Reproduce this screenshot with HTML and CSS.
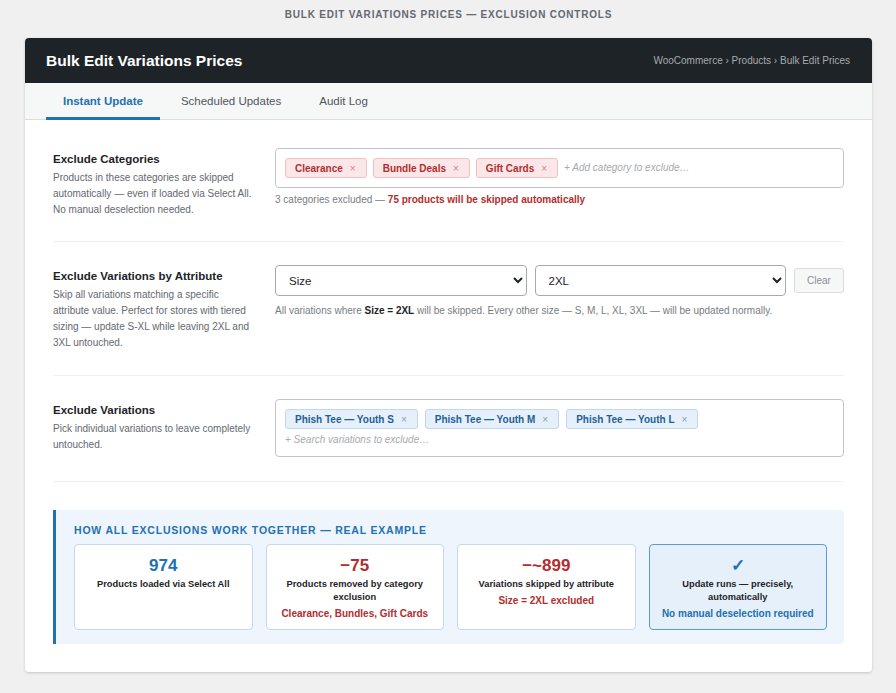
FILE: index.html
```html
<!DOCTYPE html>
<html lang="en">
<head>
    <meta charset="UTF-8">
    <meta name="viewport" content="width=device-width, initial-scale=1.0">
    <title>Bulk Edit Variations Prices</title>
    <link rel="stylesheet" href="styles.css">
</head>
<body>
    <h1 class="page-title">Bulk Edit Variations Prices — Exclusion Controls</h1>
    <div class="panel">
        <header class="panel-head">
            <h2>Bulk Edit Variations Prices</h2>
            <span class="crumbs">WooCommerce › Products › Bulk Edit Prices</span>
        </header>
        <nav class="tabs">
            <a href="#" class="tab active">Instant Update</a>
            <a href="#" class="tab">Scheduled Updates</a>
            <a href="#" class="tab">Audit Log</a>
        </nav>
        <main class="panel-body">
            <section class="row">
                <div class="row-label">
                    <h3>Exclude Categories</h3>
                    <p>Products in these categories are skipped automatically — even if loaded via Select All. No manual deselection needed.</p>
                </div>
                <div class="row-field">
                    <div class="tagbox">
                        <span class="tag red">Clearance<i>×</i></span>
                        <span class="tag red">Bundle Deals<i>×</i></span>
                        <span class="tag red">Gift Cards<i>×</i></span>
                        <span class="placeholder">+ Add category to exclude…</span>
                    </div>
                    <p class="hint">3 categories excluded — <strong class="warn">75 products will be skipped automatically</strong></p>
                </div>
            </section>
            <section class="row">
                <div class="row-label">
                    <h3>Exclude Variations by Attribute</h3>
                    <p>Skip all variations matching a specific attribute value. Perfect for stores with tiered sizing — update S-XL while leaving 2XL and 3XL untouched.</p>
                </div>
                <div class="row-field">
                    <div class="select-row">
                        <select><option>Size</option><option>Color</option></select>
                        <select><option>2XL</option><option>3XL</option></select>
                        <button class="btn-clear">Clear</button>
                    </div>
                    <p class="hint after-select">All variations where <strong>Size = 2XL</strong> will be skipped. Every other size — S, M, L, XL, 3XL — will be updated normally.</p>
                </div>
            </section>
            <section class="row">
                <div class="row-label">
                    <h3>Exclude Variations</h3>
                    <p>Pick individual variations to leave completely untouched.</p>
                </div>
                <div class="row-field">
                    <div class="tagbox stacked">
                        <div class="tags">
                            <span class="tag blue">Phish Tee — Youth S<i>×</i></span>
                            <span class="tag blue">Phish Tee — Youth M<i>×</i></span>
                            <span class="tag blue">Phish Tee — Youth L<i>×</i></span>
                        </div>
                        <span class="placeholder">+ Search variations to exclude…</span>
                    </div>
                </div>
            </section>

            <div class="summary">
                <h4>How all exclusions work together — real example</h4>
                <div class="steps">
                    <div class="step">
                        <div class="num">974</div>
                        <div class="step-label">Products loaded via Select All</div>
                    </div>
                    <div class="step">
                        <div class="num minus">−75</div>
                        <div class="step-label">Products removed by category exclusion</div>
                        <div class="step-sub">Clearance, Bundles, Gift Cards</div>
                    </div>
                    <div class="step">
                        <div class="num minus">−~899</div>
                        <div class="step-label">Variations skipped by attribute</div>
                        <div class="step-sub">Size = 2XL excluded</div>
                    </div>
                    <div class="step done">
                        <div class="num">✓</div>
                        <div class="step-label">Update runs — precisely, automatically</div>
                        <div class="step-sub">No manual deselection required</div>
                    </div>
                </div>
            </div>
        </main>
    </div>
</body>
</html>
```

FILE: styles.css
```css
* {
    margin: 0;
    padding: 0;
    box-sizing: border-box;
}
body {
    font-family: "Liberation Sans", Arial, sans-serif;
    background-color: #f0f0f1;
    color: #1d2327;
    padding: 8px 24px 20px 25px;
}
.page-title {
    font-size: 10px;
    line-height: 14px;
    font-weight: 700;
    letter-spacing: 0.8px;
    text-transform: uppercase;
    text-align: center;
    color: #646970;
    margin-bottom: 16px;
}
.panel {
    background-color: #ffffff;
    border-radius: 4px;
    box-shadow: 0 1px 3px rgba(0, 0, 0, 0.18);
    overflow: hidden;
}
.panel-head {
    background-color: #1d2327;
    height: 45px;
    padding: 0 22px 0 21px;
    display: flex;
    align-items: center;
    justify-content: space-between;
}
.panel-head h2 {
    color: #ffffff;
    font-size: 15.5px;
    font-weight: 700;
}
.crumbs {
    color: #a7aaad;
    font-size: 10px;
}
.tabs {
    display: flex;
    gap: 4px;
    background-color: #f6f7f7;
    border-bottom: 1px solid #dcdcde;
    padding: 0 21px;
    height: 37px;
}
.tab {
    display: flex;
    align-items: center;
    padding: 2px 17px 0;
    font-size: 11.5px;
    color: #50575e;
    text-decoration: none;
    border-bottom: 3px solid transparent;
    margin-bottom: -1px;
}
.tab.active {
    color: #2271b1;
    font-weight: 700;
    border-bottom-color: #2271b1;
}
.panel-body {
    padding: 28px;
}
.row {
    display: grid;
    grid-template-columns: 202px 1fr;
    gap: 20px;
    padding: 23px 0 24px;
    border-bottom: 1px solid #f0f0f1;
}
.row:first-child {
    padding-top: 0;
    padding-bottom: 23px;
}
.row-label {
    padding-top: 4px;
}
.row-label h3 {
    font-size: 11.5px;
    line-height: 15px;
    font-weight: 700;
    color: #1d2327;
    margin-bottom: 3px;
}
.row-label p {
    font-size: 10px;
    line-height: 16px;
    color: #646970;
}
.tagbox {
    border: 1px solid #c3c4c7;
    border-radius: 4px;
    padding: 9px;
    display: flex;
    flex-wrap: wrap;
    align-items: center;
    gap: 6px;
}
.tagbox.stacked {
    flex-direction: column;
    align-items: flex-start;
    gap: 4px;
}
.tags {
    display: flex;
    gap: 7px;
}
.tag {
    display: inline-flex;
    align-items: center;
    height: 20px;
    padding: 0 10px 0 9px;
    border-radius: 3px;
    font-size: 10px;
    font-weight: 700;
    border: 1px solid;
}
.tag i {
    font-style: normal;
    font-weight: 400;
    font-size: 10px;
    margin-left: 7px;
    opacity: 0.55;
}
.tag.red {
    background-color: #fce7e8;
    border-color: #f1c0c1;
    color: #b32d2e;
}
.tag.blue {
    background-color: #e6f0fa;
    border-color: #c2d7ec;
    color: #1e5f96;
}
.placeholder {
    font-size: 10px;
    line-height: 14px;
    font-style: italic;
    color: #a7aaad;
}
.hint {
    margin-top: 5px;
    font-size: 10px;
    line-height: 14px;
    color: #787c82;
}
.hint strong {
    color: #1d2327;
}
.hint .warn {
    color: #b32d2e;
}
.hint.after-select {
    margin-top: 8px;
}
.select-row {
    display: flex;
    align-items: center;
    gap: 8px;
}
.select-row select {
    flex: 1;
    height: 31px;
    border: 1px solid #a7aaad;
    border-radius: 4px;
    background-color: #ffffff;
    padding: 0 9px;
    font-family: inherit;
    font-size: 11.5px;
    color: #1d2327;
}
.btn-clear {
    width: 50px;
    height: 25px;
    border: 1px solid #dcdcde;
    border-radius: 3px;
    background-color: #f6f7f7;
    color: #8c8f94;
    font-family: inherit;
    font-size: 10px;
}
.summary {
    margin-top: 28px;
    background-color: #eff5fc;
    border-left: 3px solid #2271b1;
    border-radius: 0 4px 4px 0;
    padding: 13px 17px 14px 18px;
}
.summary h4 {
    font-size: 10.5px;
    line-height: 14px;
    font-weight: 700;
    letter-spacing: 0.8px;
    text-transform: uppercase;
    color: #2271b1;
    margin-bottom: 7px;
}
.steps {
    display: grid;
    grid-template-columns: repeat(4, 1fr);
    gap: 13px;
}
.step {
    background-color: #ffffff;
    border: 1px solid #c5d9ed;
    border-radius: 4px;
    padding: 10px 10px 8px;
    text-align: center;
}
.step.done {
    background-color: #e6f0fa;
    border-color: #5b9bd5;
}
.num {
    font-size: 17px;
    line-height: 21px;
    font-weight: 700;
    color: #2271b1;
}
.num.minus {
    color: #b32d2e;
}
.step-label {
    margin-top: 2px;
    font-size: 9.3px;
    line-height: 13px;
    font-weight: 700;
    color: #1d2327;
}
.step-sub {
    margin-top: 3px;
    font-size: 10px;
    line-height: 14px;
    font-weight: 700;
    color: #b32d2e;
}
.step.done .step-sub {
    color: #2271b1;
}
```
